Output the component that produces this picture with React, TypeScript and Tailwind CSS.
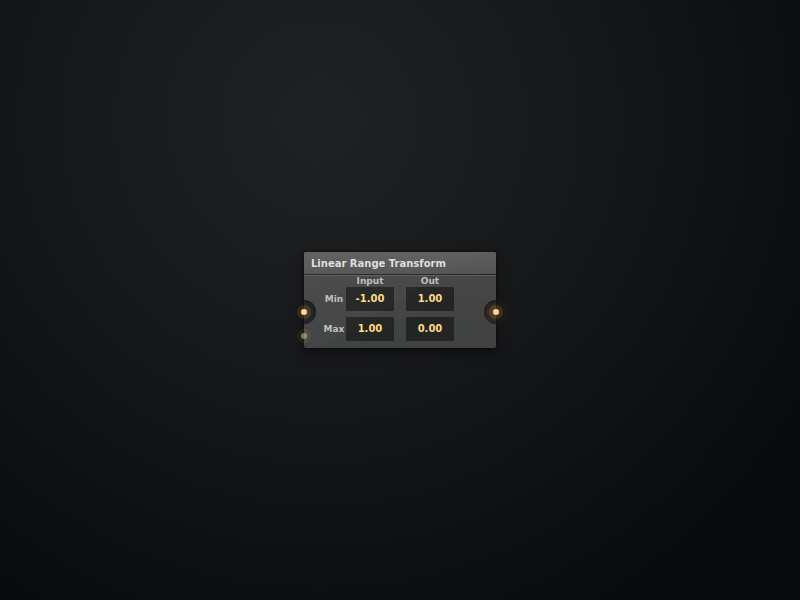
import { useState } from "react";

const columns = ["Input", "Out"];

const rows = [
  { label: "Min", values: ["-1.00", "1.00"] },
  { label: "Max", values: ["1.00", "0.00"] },
];

function Dot({ active = false }: { active?: boolean }) {
  return (
    <span
      className={`block size-[6px] rounded-full bg-[#ffd97f] ${
        active
          ? "shadow-[0_0_0_4px_rgba(255,200,130,0.12),0_0_12px_4px_rgba(255,120,40,0.2)]"
          : "shadow-[0_0_0_4px_rgba(255,200,120,0.12),0_0_6px_2px_rgba(255,160,70,0.06)]"
      }`}
    />
  );
}

function ValueRow({ label, values }: { label: string; values: string[] }) {
  const [current, setCurrent] = useState(values);

  return (
    <div className="flex h-6 items-center">
      <span id={label} className="w-6 text-center text-[9px] leading-6 text-[#bfbfbf]">
        {label}
      </span>
      <div className="flex gap-3">
        {current.map((value, idx) => (
          <input
            key={columns[idx]}
            type="text"
            aria-labelledby={`${label} ${columns[idx]}`}
            value={value}
            onChange={(e) =>
              setCurrent(current.map((v, i) => (i === idx ? e.target.value : v)))
            }
            className="h-6 w-12 bg-[#232424] pb-[2px] text-center text-[10px] font-bold text-[#ffd97f] outline-none"
          />
        ))}
      </div>
    </div>
  );
}

export default function App() {
  return (
    <main className="flex min-h-screen items-center justify-center bg-[radial-gradient(circle_at_40%_20%,#202122,#17181a_38%,#090a0c_84%)] font-['DejaVu_Sans',sans-serif] font-bold">
      <section className="relative w-48 rounded-[2px] shadow-[0_4px_12px_rgba(0,0,0,0.5),0_0_2px_rgba(0,0,0,0.6)]">
        <div className="relative overflow-hidden rounded-[2px] bg-linear-to-b from-[#484848] to-[#404142] pb-[7px]">
          <header className="flex h-[23px] items-center border-b border-[#242424] bg-linear-to-b from-[#5e5e5e] to-[#525353] px-[7px]">
            <h1 className="text-[10px] text-[#dedede]">Linear Range Transform</h1>
          </header>

          <div className="border-t border-[#5e5f5f] pl-[18px]">
            <div className="flex h-[11px] items-center gap-3 pl-6">
              {columns.map((name) => (
                <span
                  key={name}
                  id={name}
                  className="w-12 text-center text-[9px] text-[#bfbfbf]"
                >
                  {name}
                </span>
              ))}
            </div>
            <div className="flex flex-col gap-[6px]">
              {rows.map((row) => (
                <ValueRow key={row.label} {...row} />
              ))}
            </div>
          </div>

          {/* Glass highlight */}
          <div className="pointer-events-none absolute inset-0 bg-[linear-gradient(150deg,rgba(255,255,255,0.03),rgba(255,255,255,0.018)_50%,rgba(255,255,255,0.008)_50%,rgba(255,255,255,0.008)_60%,transparent_60%)]" />

          {/* Sockets cut into the card edges */}
          <span className="absolute top-12 -left-3 size-6 rounded-full bg-[#292827] shadow-[inset_0_1px_4px_rgba(0,0,0,0.6)]" />
          <span className="absolute top-12 -right-3 size-6 rounded-full bg-[#2b2726] shadow-[inset_0_1px_4px_rgba(0,0,0,0.6)]" />
        </div>

        <button type="button" aria-label="Value in" className="absolute top-[57px] -left-[3px]">
          <Dot />
        </button>
        <button
          type="button"
          aria-label="Secondary in"
          className="absolute top-[81px] -left-[3px] opacity-50"
        >
          <Dot />
        </button>
        <button type="button" aria-label="Value out" className="absolute top-[57px] -right-[3px]">
          <Dot active />
        </button>
      </section>
    </main>
  );
}
